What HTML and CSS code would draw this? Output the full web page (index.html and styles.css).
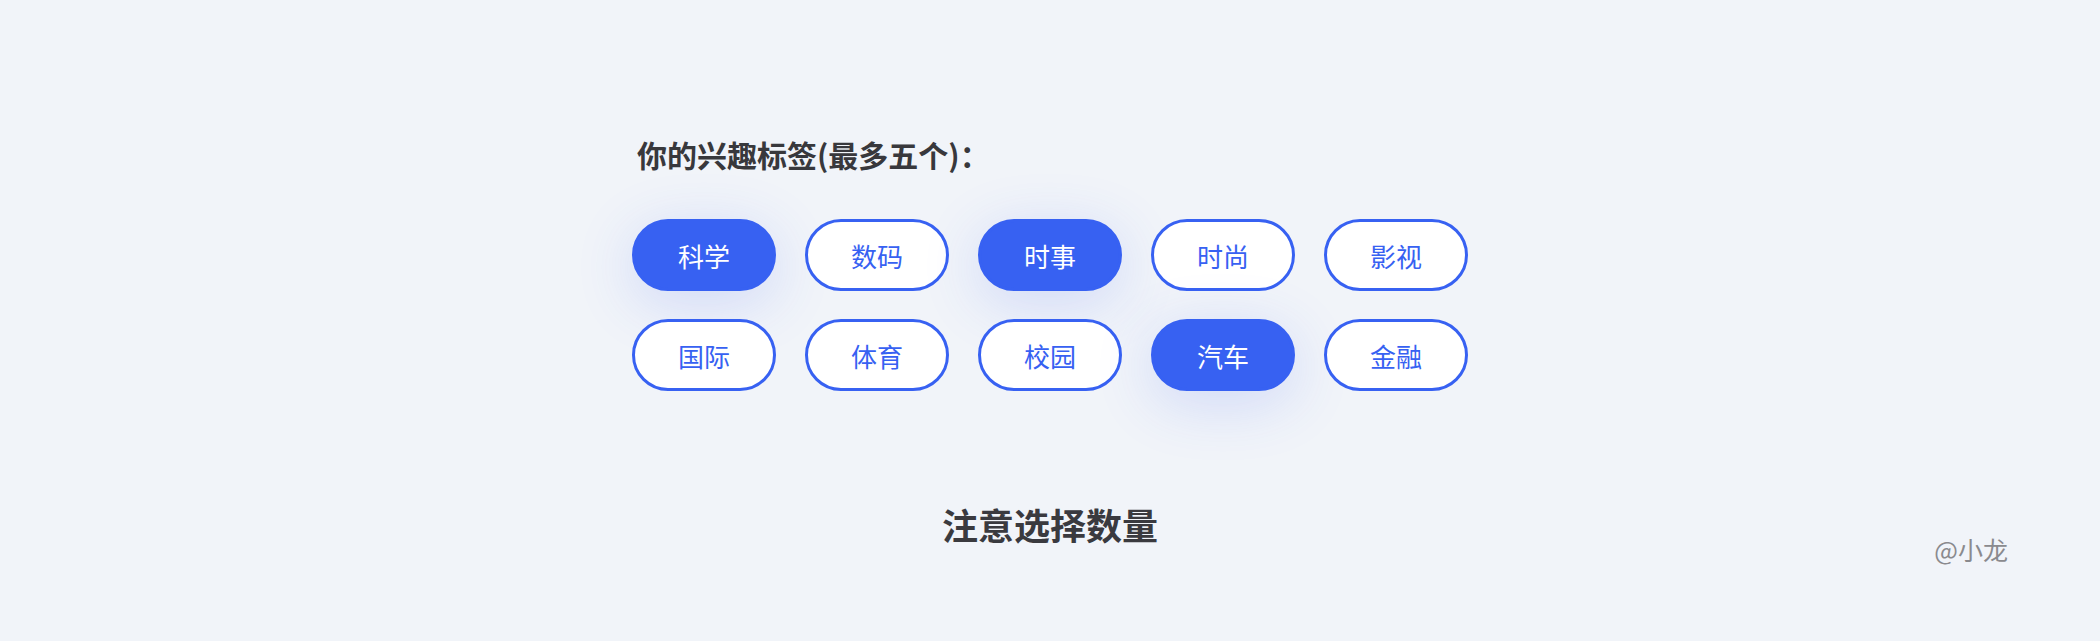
FILE: index.html
```html
<!DOCTYPE html>
<html lang="zh-CN">

<head>
  <meta charset="UTF-8">
  <meta name="viewport" content="width=device-width, initial-scale=1.0">
  <title>兴趣标签</title>
  <link rel="stylesheet" href="styles.css">
</head>

<body>
  <div class="tag-page">
    <div class="tag-panel">
      <h3 class="tag-title">你的兴趣标签(最多五个)：</h3>
      <div class="tag-list">
        <span class="tag active">科学</span>
        <span class="tag">数码</span>
        <span class="tag active">时事</span>
        <span class="tag">时尚</span>
        <span class="tag">影视</span>
        <span class="tag">国际</span>
        <span class="tag">体育</span>
        <span class="tag">校园</span>
        <span class="tag active">汽车</span>
        <span class="tag">金融</span>
      </div>
    </div>

    <div class="tag-footer">
      <span></span>
      <h2 class="tag-tip">注意选择数量</h2>
      <span class="tag-author">@小龙</span>
    </div>
  </div>
</body>

</html>
```

FILE: styles.css
```css
html,
body {
  margin: 0;
  padding: 0;
  background: #f1f4f9;
  font-family: "Noto Sans CJK SC", "Noto Sans", sans-serif;
  color: #38383c;
}

.tag-page {
  height: 641px;
  display: flex;
  flex-direction: column;
}

.tag-panel {
  width: 836px;
  margin: 0 auto;
  padding-top: 134px;
}

.tag-title {
  margin: 0 0 45px 5px;
  font-size: 30px;
  line-height: 40px;
  font-weight: 700;
  color: #38383c;
}

.tag-list {
  display: grid;
  grid-template-columns: repeat(5, 144px);
  column-gap: 29px;
  row-gap: 28px;
}

.tag {
  box-sizing: border-box;
  height: 72px;
  border: 3px solid #3761f2;
  border-radius: 36px;
  background: #fff;
  color: #3761f2;
  font-size: 26px;
  display: flex;
  align-items: center;
  justify-content: center;
}

/* 选中状态 */
.tag.active {
  background: #3761f2;
  color: #fff;
  box-shadow: 0 12px 60px rgba(55, 97, 242, 0.18);
}

.tag-footer {
  display: grid;
  grid-template-columns: 1fr auto 1fr;
  align-items: end;
  padding: 0 92px;
  margin-top: 109px;
}

.tag-tip {
  margin: 0;
  font-size: 36px;
  line-height: 48px;
  font-weight: 700;
  color: #3a3a3f;
}

.tag-author {
  justify-self: end;
  font-size: 25px;
  line-height: 34px;
  color: #8a8a8e;
  margin-bottom: -18px;
}
```
